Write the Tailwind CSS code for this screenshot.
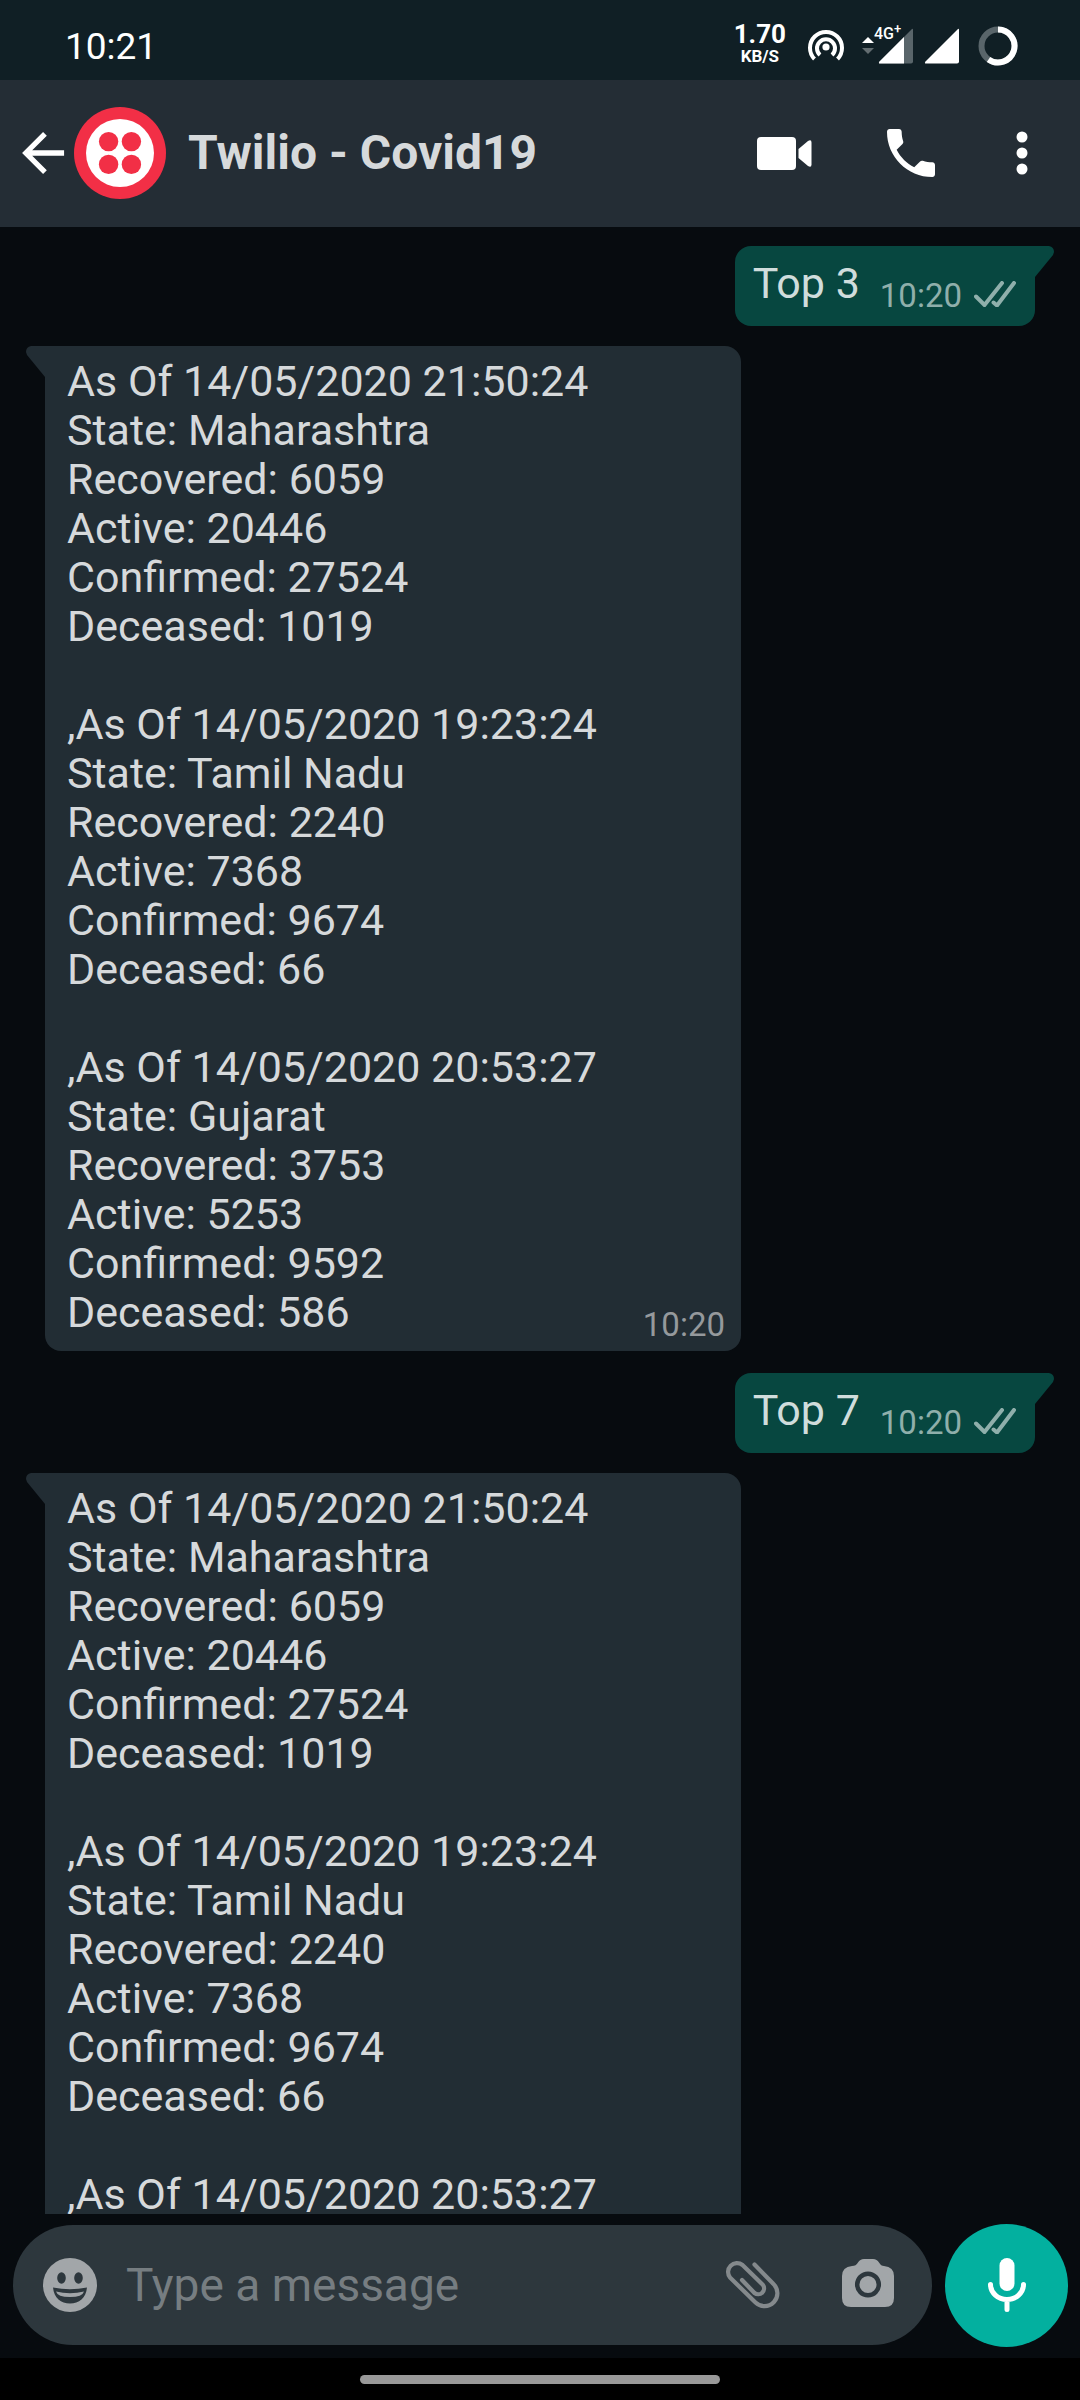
<!DOCTYPE html>
<html lang="en">
<head>
<meta charset="utf-8">
<meta name="viewport" content="width=device-width, initial-scale=1">
<title>Twilio - Covid19</title>
<script src="https://cdn.jsdelivr.net/npm/@tailwindcss/browser@4"></script>
</head>
<body class="flex h-screen flex-col overflow-hidden bg-[#070b0f] font-['Roboto',sans-serif] text-[#d6d9db]">

<!-- Status bar -->
<div class="flex h-20 shrink-0 items-center justify-between bg-[#101f25] pt-3 pr-[62px] pl-[65px] text-white">
  <time class="pt-[2px] text-[37px] leading-10">10:21</time>
  <div class="flex items-center">
    <div class="flex flex-col items-center pb-1 font-bold">
      <span class="text-[26px] leading-6">1.70</span>
      <span class="text-[17px] leading-5">KB/S</span>
    </div>
    <svg class="mr-[2px] ml-[22px] h-[34px] w-9" viewBox="0 0 36 34" fill="none" stroke="currentColor" stroke-width="4" aria-hidden="true">
      <circle cx="18" cy="18" r="3.600" fill="currentColor" stroke="none"/>
      <path d="M12 26A9 9 0 1 1 24 26"/>
      <path d="M6.500 30A16 16 0 1 1 29.500 30"/>
    </svg>
    <svg class="ml-4 h-5 w-3" viewBox="0 0 12 20" fill="currentColor" aria-hidden="true">
      <path d="M0 7 6 1l6 6z"/>
      <path d="M0 12h12l-6 6z" opacity=".35"/>
    </svg>
    <div class="relative ml-1">
      <svg class="h-9 w-9" viewBox="0 0 36 36" aria-hidden="true">
        <path d="M2 35.500h31a2 2 0 0 0 2-2V2Q35 0 33.500 1.500L1.500 33.500Q0 35.500 2 35.500z" fill="#59656a"/>
        <path d="M26 9v26.500H2Q0 35.500 1.500 33.500z" fill="#fff"/>
      </svg>
      <span class="absolute -top-1 -left-1 text-[16px] leading-5 font-medium">4G<sup class="text-[13px]">+</sup></span>
    </div>
    <svg class="ml-[10px] h-9 w-9" viewBox="0 0 36 36" fill="#fff" aria-hidden="true">
      <path d="M2 35.500h31a2 2 0 0 0 2-2V2Q35 0 33.500 1.500L1.500 33.500Q0 35.500 2 35.500z"/>
    </svg>
    <svg class="ml-[18px] h-10 w-10" viewBox="0 0 40 40" fill="none" stroke-width="6" aria-hidden="true">
      <circle cx="20" cy="20" r="16.500" stroke="#59656a"/>
      <path d="M20 3.500A16.500 16.500 0 1 1 10.500 33.500" stroke="#fff"/>
    </svg>
  </div>
</div>

<!-- Conversation header -->
<header class="flex h-[147px] shrink-0 items-center bg-[#242d35] pr-[46px] pb-[2px] pl-[22px]">
  <button type="button" aria-label="Back" class="shrink-0">
    <svg class="h-11 w-11" viewBox="0 0 46 46" fill="none" stroke="#fff" stroke-width="5.500"><path d="M44 23H5M24 3 4 23l20 20"/></svg>
  </button>
  <svg class="ml-2 h-[92px] w-[92px] shrink-0" viewBox="0 0 92 92" role="img" aria-label="Twilio">
    <circle cx="46" cy="46" r="46" fill="#f22f46"/>
    <circle cx="46" cy="46" r="34" fill="#fff"/>
    <g fill="#f22f46"><circle cx="34.600" cy="34.600" r="9.700"/><circle cx="57.400" cy="34.600" r="9.700"/><circle cx="34.600" cy="57.400" r="9.700"/><circle cx="57.400" cy="57.400" r="9.700"/></g>
  </svg>
  <h1 class="ml-[22px] min-w-0 flex-1 truncate text-[48px] leading-[60px] font-bold">Twilio - Covid19</h1>
  <div class="flex items-center gap-[75px] text-white">
    <button type="button" aria-label="Video call">
      <svg class="h-12 w-[55px]" viewBox="0 0 55 48" fill="currentColor"><rect y="8" width="39" height="33" rx="4"/><path d="M41.500 20 51 12q3.500-2 3.500 1.500v22q0 3.500-3.500 1.500l-9.500-8z"/></svg>
    </button>
    <button type="button" aria-label="Call">
      <svg class="h-12 w-12" viewBox="3 3 18 18" fill="currentColor"><path d="M6.620 10.790c1.440 2.830 3.760 5.140 6.590 6.590l2.200-2.200c.270-.270.670-.360 1.020-.240 1.120.370 2.330.570 3.570.570.550 0 1 .450 1 1V20c0 .550-.450 1-1 1-9.390 0-17-7.610-17-17 0-.550.450-1 1-1h3.500c.550 0 1 .450 1 1 0 1.250.200 2.450.570 3.570.110.350.030.740-.250 1.020l-2.200 2.200z"/></svg>
    </button>
    <button type="button" aria-label="More options">
      <svg class="h-12 w-6" viewBox="0 0 24 48" fill="currentColor"><circle cx="12" cy="8" r="5.500"/><circle cx="12" cy="24" r="5.500"/><circle cx="12" cy="40" r="5.500"/></svg>
    </button>
  </div>
</header>

<!-- Messages -->
<main class="flex min-h-0 flex-1 flex-col overflow-hidden pt-[19px] pr-[45px] pl-[45px] text-[43px] leading-[49px]">
  <article class="relative mb-5 flex h-20 shrink-0 items-end self-end rounded-2xl rounded-tr-none bg-[#074740] pr-[19px] pb-[14px] pl-[18px] text-[#d0dddc]">
    <p class="pb-1">Top 3</p>
    <time class="ml-5 text-[33px] leading-8 text-[#8fafab]">10:20</time>
    <svg class="mb-[5px] ml-3 h-[26px] w-[42px]" viewBox="0 0 42 26" fill="none" stroke="#8fafab" stroke-width="4" stroke-linecap="round" aria-label="Delivered" role="img"><path d="M2 15.500 10.500 24 28 2M19.500 21.500l3.500 3L40 2"/></svg>
    <svg class="absolute top-0 left-full h-[31px] w-5" viewBox="0 0 20 31" fill="#074740" aria-hidden="true"><path d="M-1 0H14q5 1 5 6l-1 3L0 31h-1z"/></svg>
  </article>

  <article class="relative mb-[22px] flex w-[696px] max-w-full shrink-0 items-end rounded-2xl rounded-tl-none bg-[#222d34] pt-[11px] pr-4 pb-[10px] pl-[22px]">
    <svg class="absolute top-0 right-full h-[31px] w-5" viewBox="0 0 20 31" fill="#222d34" aria-hidden="true"><path d="M21 0H6Q1 1 1 6l1 3 18 22h1z"/></svg>
    <p class="min-w-0 flex-1 pb-1">As Of 14/05/2020 21:50:24<br>State: Maharashtra<br>Recovered: 6059<br>Active: 20446<br>Confirmed: 27524<br>Deceased: 1019<br><br>,As Of 14/05/2020 19:23:24<br>State: Tamil Nadu<br>Recovered: 2240<br>Active: 7368<br>Confirmed: 9674<br>Deceased: 66<br><br>,As Of 14/05/2020 20:53:27<br>State: Gujarat<br>Recovered: 3753<br>Active: 5253<br>Confirmed: 9592<br>Deceased: 586</p>
    <time class="-ml-20 text-[33px] leading-8 text-[#95999c]">10:20</time>
  </article>

  <article class="relative mb-5 flex h-20 shrink-0 items-end self-end rounded-2xl rounded-tr-none bg-[#074740] pr-[19px] pb-[14px] pl-[18px] text-[#d0dddc]">
    <p class="pb-1">Top 7</p>
    <time class="ml-5 text-[33px] leading-8 text-[#8fafab]">10:20</time>
    <svg class="mb-[5px] ml-3 h-[26px] w-[42px]" viewBox="0 0 42 26" fill="none" stroke="#8fafab" stroke-width="4" stroke-linecap="round" aria-label="Delivered" role="img"><path d="M2 15.500 10.500 24 28 2M19.500 21.500l3.500 3L40 2"/></svg>
    <svg class="absolute top-0 left-full h-[31px] w-5" viewBox="0 0 20 31" fill="#074740" aria-hidden="true"><path d="M-1 0H14q5 1 5 6l-1 3L0 31h-1z"/></svg>
  </article>

  <article class="relative w-[696px] max-w-full shrink-0 rounded-2xl rounded-tl-none bg-[#222d34] pt-[11px] pr-4 pb-8 pl-[22px]">
    <svg class="absolute top-0 right-full h-[31px] w-5" viewBox="0 0 20 31" fill="#222d34" aria-hidden="true"><path d="M21 0H6Q1 1 1 6l1 3 18 22h1z"/></svg>
    <p>As Of 14/05/2020 21:50:24<br>State: Maharashtra<br>Recovered: 6059<br>Active: 20446<br>Confirmed: 27524<br>Deceased: 1019<br><br>,As Of 14/05/2020 19:23:24<br>State: Tamil Nadu<br>Recovered: 2240<br>Active: 7368<br>Confirmed: 9674<br>Deceased: 66<br><br>,As Of 14/05/2020 20:53:27</p>
  </article>
</main>

<!-- Composer -->
<form class="flex h-36 shrink-0 items-center gap-[13px] pr-3 pb-[2px] pl-[13px]">
  <div class="flex h-[120px] min-w-0 flex-1 items-center rounded-full bg-[#2d373d] pr-[38px] pl-[30px]">
    <button type="button" aria-label="Emoji" class="shrink-0">
      <svg class="h-[54px] w-[54px]" viewBox="0 0 54 54"><circle cx="27" cy="27" r="27" fill="#a2a6a9"/><g fill="#2d373d"><ellipse cx="18.500" cy="20" rx="4.300" ry="5.800"/><ellipse cx="35.500" cy="20" rx="4.300" ry="5.800"/><path d="M10 29.500q17 3.500 34 0C43 40 36 45.500 27 45.500S11 40 10 29.500z"/></g><path d="M13 33.500q14 3.500 28 0-1.500 5.500-14 5.500t-14-5.500z" fill="#a2a6a9"/></svg>
    </button>
    <input type="text" aria-label="Message" placeholder="Type a message" class="ml-[29px] min-w-0 flex-1 bg-transparent text-[46px] leading-[60px] outline-none placeholder:text-[#767d81]">
    <button type="button" aria-label="Attach" class="shrink-0">
      <svg class="h-[54px] w-[56px]" viewBox="0 0 56 54" fill="none" stroke="#84898c" stroke-width="4.200" stroke-linecap="round" stroke-linejoin="round"><path d="M29.500 6.500 48.500 26A12.900 12.900 0 0 1 30.500 44.500L5 19.500A8.900 8.900 0 0 1 17.500 7L38 27A5.900 5.900 0 0 1 29.500 35L17 22"/></svg>
    </button>
    <button type="button" aria-label="Camera" class="ml-[61px] shrink-0">
      <svg class="h-[54px] w-[52px]" viewBox="0 0 52 54"><path d="M10 8q4 0 6-3.500Q18 1 22 1h9q4 0 6 3.500Q39 8 42 8q10 1 10 10v22q0 9-9 9H9q-9 0-9-9V18Q0 9 10 8z" fill="#a2a6a9"/><circle cx="26" cy="26.500" r="10.800" fill="none" stroke="#2d373d" stroke-width="4.500"/></svg>
    </button>
  </div>
  <button type="button" aria-label="Record voice message" class="flex h-[123px] w-[123px] shrink-0 items-center justify-center rounded-full bg-[#03b09f]">
    <svg class="h-[54px] w-10" viewBox="0 0 40 54" fill="none" stroke="#fff" stroke-width="5" stroke-linecap="round"><rect x="12.500" y="0" width="15" height="33" rx="7.500" fill="#fff" stroke="none"/><path d="M3.500 26.500a16.500 15 0 0 0 33 0M20 42v9.500"/></svg>
  </button>
</form>

<!-- Gesture bar -->
<div class="flex h-[42px] shrink-0 items-center justify-center bg-black">
  <div class="h-[9px] w-1/3 rounded-full bg-[#999]"></div>
</div>
</body>
</html>
